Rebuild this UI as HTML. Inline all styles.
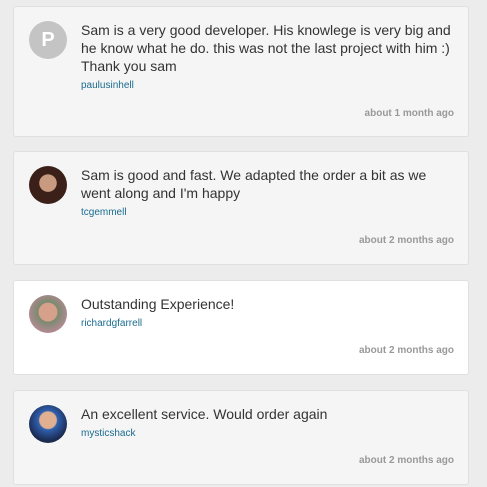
<!DOCTYPE html>
<html><head><style>
body{margin:0;background:#ececec;font-family:"Liberation Sans",Arial,sans-serif;width:487px;height:487px;overflow:hidden;position:relative}
.c{position:absolute;left:13px;width:454px;background:#f5f5f5;border:1px solid #e0e0e0;border-radius:3px}
.av{position:absolute;left:15px;top:14px;width:38px;height:38px;border-radius:50%;overflow:hidden}
.t{position:absolute;left:67px;top:14px;width:372px;font-size:14px;line-height:18px;color:#333}
.u{font-size:10px;color:#1a6b8f;margin-top:5px;line-height:12px}
.d{position:absolute;right:14px;font-size:10px;color:#999;font-weight:bold}
</style></head><body>
<div class="c" style="top:6px;height:129px">
<div class="av" style="background:#c4c4c4;color:#fff;font-weight:bold;font-size:20px;text-align:center;line-height:38px">P</div>
<div class="t">Sam is a very good developer. His knowlege is very big and he know what he do. this was not the last project with him :) Thank you sam<div class="u">paulusinhell</div></div>
<div class="d" style="top:101px">about 1 month ago</div></div>
<div class="c" style="top:151px;height:112px">
<div class="av" style="background:radial-gradient(circle at 50% 45%,#c89a80 0 30%,#3a2018 32%)"></div>
<div class="t">Sam is good and fast. We adapted the order a bit as we went along and I'm happy<div class="u">tcgemmell</div></div>
<div class="d" style="top:83px">about 2 months ago</div></div>
<div class="c" style="top:280px;height:93px;background:#fff">
<div class="av" style="background:radial-gradient(circle at 50% 45%,#d7a08a 0 32%,#7a8a70 35%,#b08a90 70%)"></div>
<div class="t">Outstanding Experience!<div class="u">richardgfarrell</div></div>
<div class="d" style="top:64px">about 2 months ago</div></div>
<div class="c" style="top:390px;height:93px">
<div class="av" style="background:radial-gradient(circle at 50% 40%,#e0b090 0 28%,#3060b0 32%,#1a2a50 70%)"></div>
<div class="t">An excellent service. Would order again<div class="u">mysticshack</div></div>
<div class="d" style="top:64px">about 2 months ago</div></div>
</body></html>
